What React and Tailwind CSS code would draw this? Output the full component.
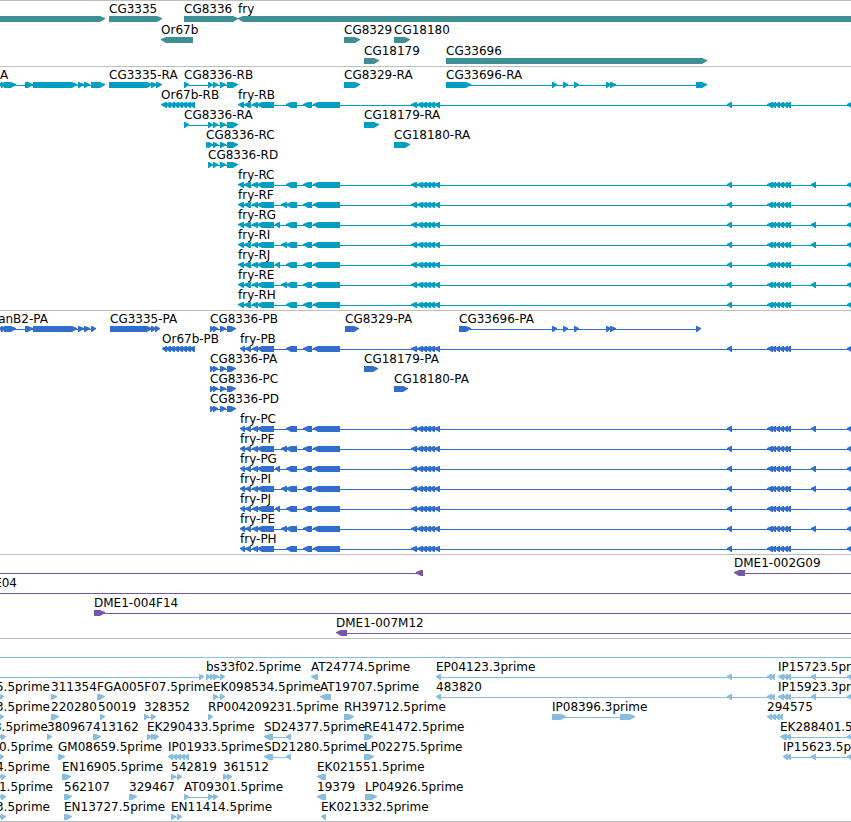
import React from 'react';

// exon blocks shared by all the fry isoforms
const fryTail = [[286, 297], [303, 312], [313, 340], [411, 417], [417, 423], [421, 427], [425, 431], [429, 435], [434, 440], [727, 732], [767, 773], [771, 776], [775, 780], [779, 784], [783, 788], [786, 791], [847, 852]];
const fryRna = [[238, 244], [244, 251], [252, 258], [257, 274], ...fryTail];
const fryCds = [[240, 245], [245, 251], [252, 258], [257, 274], ...fryTail];
const exonA = [275, 280];
const exonB = [281, 287];
const exonC = [811, 816];

const or67b = [[165, 171], [169, 175], [173, 179], [177, 183], [181, 187], [185, 191], [189, 195]];
const cg8336 = [[208, 213], [213, 218], [220, 226], [227, 238]];
const cg8336Cds = [[210, 214], [213, 218], [220, 226], [227, 236]];
const ranStart = [[-4, 3], [1, 6], [4, 16], [25, 33], [33, 77], [78, 84], [84, 90]];
const cg33696 = [[552, 557], [563, 568], [574, 579], [606, 611], [610, 616]];
const ip15723 = [[778, 784], [783, 788], [786, 791], [811, 816], [847, 852]];
const ep04123 = [[436, 441], [727, 732], [767, 772], [771, 775]];

// forward and reverse features: label, blocks, label position
const fwd = (label, blocks, opts) => ({ label, blocks, dir: 1, x: blocks[0]?.[0], ...opts });
const rev = (label, blocks, opts) => ({ label, blocks, dir: -1, x: blocks[0]?.[0], ...opts });

const toEdge = { to: '100%' };

const tracks = [
    {
        name: 'Genes',
        color: '#3e8e93',
        rowClass: 'h-[21px]',
        className: 'pb-px',
        rows: [
            [fwd('', [[-10, 105]]), fwd('CG3335', [[109, 162]]), fwd('CG8336', [[184, 238]]), rev('fry', [[238, 4000]])],
            [rev('Or67b', [[161, 193]]), fwd('CG8329', [[344, 360]]), fwd('CG18180', [[394, 410]])],
            [fwd('CG18179', [[364, 379]]), fwd('CG33696', [[446, 707]])],
        ],
    },
    {
        name: 'Transcripts',
        color: '#009fc1',
        rowClass: 'h-5',
        className: 'pb-0.5',
        rows: [
            [
                fwd('A', [...ranStart, [91, 105]], { x: 0 }),
                fwd('CG3335-RA', [[109, 113], [110, 152], [151, 157], [156, 162]]),
                fwd('CG8336-RB', [[184, 189], ...cg8336]),
                fwd('CG8329-RA', [[344, 360]]),
                fwd('CG33696-RA', [[446, 471], ...cg33696, [696, 707]]),
            ],
            [rev('Or67b-RB', [[161, 167], ...or67b]), rev('fry-RB', fryRna, toEdge)],
            [fwd('CG8336-RA', [[184, 189], ...cg8336]), fwd('CG18179-RA', [[364, 379]])],
            [fwd('CG8336-RC', [[206, 210], ...cg8336]), fwd('CG18180-RA', [[394, 410]])],
            [fwd('CG8336-RD', cg8336)],
            [rev('fry-RC', [...fryRna, exonC], toEdge)],
            [rev('fry-RF', [...fryRna, exonB], toEdge)],
            [rev('fry-RG', [...fryRna, exonA, exonC], toEdge)],
            [rev('fry-RI', [...fryRna, exonB, exonC], toEdge)],
            [rev('fry-RJ', [...fryRna, exonA], toEdge)],
            [rev('fry-RE', [...fryRna, exonB, exonC], toEdge)],
            [rev('fry-RH', fryRna, toEdge)],
        ],
    },
    {
        name: 'CDS',
        color: '#316dcc',
        rowClass: 'h-5',
        className: 'pb-0.5',
        rows: [
            [
                fwd('anB2-PA', [...ranStart, [91, 96]], { end: 48 }),
                fwd('CG3335-PA', [[110, 152], [151, 156], [155, 160]]),
                fwd('CG8336-PB', cg8336Cds),
                fwd('CG8329-PA', [[345, 359]]),
                fwd('CG33696-PA', [[459, 471], ...cg33696, [696, 701]]),
            ],
            [rev('Or67b-PB', [[162, 167], ...or67b]), rev('fry-PB', fryCds, toEdge)],
            [fwd('CG8336-PA', cg8336Cds), fwd('CG18179-PA', [[364, 378]])],
            [fwd('CG8336-PC', cg8336Cds), fwd('CG18180-PA', [[394, 408]])],
            [fwd('CG8336-PD', cg8336Cds)],
            [rev('fry-PC', [...fryCds, exonC], toEdge)],
            [rev('fry-PF', [...fryCds, exonB], toEdge)],
            [rev('fry-PG', [...fryCds, exonA, exonC], toEdge)],
            [rev('fry-PI', [...fryCds, exonB, exonC], toEdge)],
            [rev('fry-PJ', [...fryCds, exonA], toEdge)],
            [rev('fry-PE', [...fryCds, exonB, exonC], toEdge)],
            [rev('fry-PH', fryCds, toEdge)],
        ],
    },
    {
        name: 'BACs',
        color: '#7556a8',
        rowClass: 'h-5',
        className: 'pb-0.5',
        rows: [
            [rev('', [[416, 423]], { from: 0 }), rev('DME1-002G09', [[734, 745]], toEdge)],
            [fwd('E04', [], { end: 17, from: 0, to: '100%' })],
            [fwd('DME1-004F14', [[94, 105]], toEdge)],
            [rev('DME1-007M12', [[336, 347]], toEdge)],
        ],
    },
    {
        name: 'ESTs',
        color: '#87bddf',
        rowClass: 'h-5',
        className: 'border-b pb-px',
        rows: [
            [fwd('', [], { from: 0, to: '100%' })],
            [
                fwd('', [[199, 204]], { from: 0 }),
                fwd('bs33f02.5prime', [[206, 211], [210, 214], [213, 219], [220, 225]]),
                rev('AT24774.5prime', [[311, 318]]),
                rev('EP04123.3prime', ep04123),
                rev('IP15723.5prime', ip15723, toEdge),
            ],
            [
                fwd('5.5prime', [[-1, 4]], { end: 50 }),
                fwd('311354', [[51, 57]]),
                fwd('FGA005F07.5prime', [[97, 105]]),
                fwd('EK098534.5prime', [[213, 218], [220, 225]]),
                rev('AT19707.5prime', [[320, 331]]),
                rev('483820', ep04123),
                rev('IP15923.3prime', ip15723, toEdge),
            ],
            [
                fwd('3.5prime', [[-1, 4]], { end: 50 }),
                fwd('220280', [[51, 59]]),
                fwd('50019', [[100, 105]], { x: 98 }),
                fwd('328352', [[144, 149], [151, 156]]),
                fwd('RP004209231.5prime', [[208, 213]]),
                fwd('RH39712.5prime', [[344, 354]]),
                fwd('IP08396.3prime', [[552, 566], [620, 635]]),
                rev('294575', [[767, 772], [771, 776], [775, 780], [779, 783]]),
            ],
            [
                fwd('3.5prime', [[-3, 2], [1, 6]], { end: 48 }),
                fwd('380967', [[47, 52]]),
                fwd('413162', [[93, 101]]),
                fwd('EK290433.5prime', [[147, 152], [151, 156], [154, 159]]),
                rev('SD24377.5prime', [[264, 273], [286, 291]]),
                fwd('RE41472.5prime', [[364, 373]]),
                rev('EK288401.5prime', [[780, 787], [786, 791], [847, 852]], toEdge),
            ],
            [
                fwd('0.5prime', [[-1, 4]], { end: 53 }),
                fwd('GM08659.5prime', [[58, 65]]),
                rev('IP01933.5prime', [[168, 173], [172, 177], [176, 181], [180, 185], [184, 189]]),
                rev('SD21280.5prime', [[264, 273], [286, 291]]),
                fwd('LP02275.5prime', [[364, 374]]),
                rev('IP15623.5prime', [[783, 788], [786, 791], [811, 816], [847, 852]], toEdge),
            ],
            [
                fwd('4.5prime', [[-3, 2], [1, 6]], { end: 50 }),
                fwd('EN16905.5prime', [[62, 71]]),
                fwd('542819', [[171, 176], [177, 182]]),
                fwd('361512', [[223, 228], [227, 232]]),
                rev('EK021551.5prime', [[317, 326]]),
            ],
            [
                fwd('1.5prime', [[-3, 2], [1, 6]], { end: 53 }),
                fwd('562107', [[64, 72]]),
                fwd('329467', [[129, 137]]),
                fwd('AT09301.5prime', [[184, 189], [208, 213], [213, 218]]),
                rev('19379', [[317, 326]]),
                fwd('LP04926.5prime', [[365, 377]]),
            ],
            [
                fwd('3.5prime', [[-3, 2], [1, 6]], { end: 50 }),
                fwd('EN13727.5prime', [[64, 72]]),
                fwd('EN11414.5prime', [[171, 176], [177, 182]]),
                rev('EK021332.5prime', [[321, 326]]),
            ],
        ],
    },
];

const HEAD = 5;

// a block is a bar with a slightly blunt arrow head on the strand side
const blockPath = ([start, end], dir) => {
    const head = Math.min(HEAD, end - start - 1);
    return dir > 0
        ? `M${start} 14H${end - head}L${end} 16V17L${end - head} 20H${start}Z`
        : `M${end} 14H${start + head}L${start} 16V17L${start + head} 20H${end}Z`;
};

const Feature = ({ label, blocks, dir, x, end, from, to }) => {
    const starts = blocks.map((b) => b[0]);
    const ends = blocks.map((b) => b[1]);
    const lineStart = from ?? Math.min(...starts) + 2;
    const lineEnd = to ?? Math.max(...ends) - 2;
    return (
        <g>
            <line x1={lineStart} x2={lineEnd} y1="17.5" y2="17.5" stroke="currentColor" shapeRendering="crispEdges" />
            {blocks.map((b, i) => (
                <path key={i} d={blockPath(b, dir)} fill="currentColor" />
            ))}
            {label && (
                <text x={end ?? x} y="11" textAnchor={end ? 'end' : 'start'} className="fill-black">
                    {label}
                </text>
            )}
        </g>
    );
};

const Track = ({ name, color, rowClass, className, rows }) => (
    <section aria-label={name} className={`border-[#bebebe] border-t pt-px ${className}`} style={{ color }}>
        {rows.map((features, i) => (
            <svg key={i} className={`block w-full overflow-visible ${rowClass}`}>
                {features.map((feature, j) => (
                    <Feature key={j} {...feature} />
                ))}
            </svg>
        ))}
    </section>
);

const App = () => {
    return (
        <main className="w-full overflow-hidden bg-white font-['DejaVu_Sans',sans-serif] text-xs">
            {tracks.map((track) => (
                <Track key={track.name} {...track} />
            ))}
        </main>
    );
};

export default App;
